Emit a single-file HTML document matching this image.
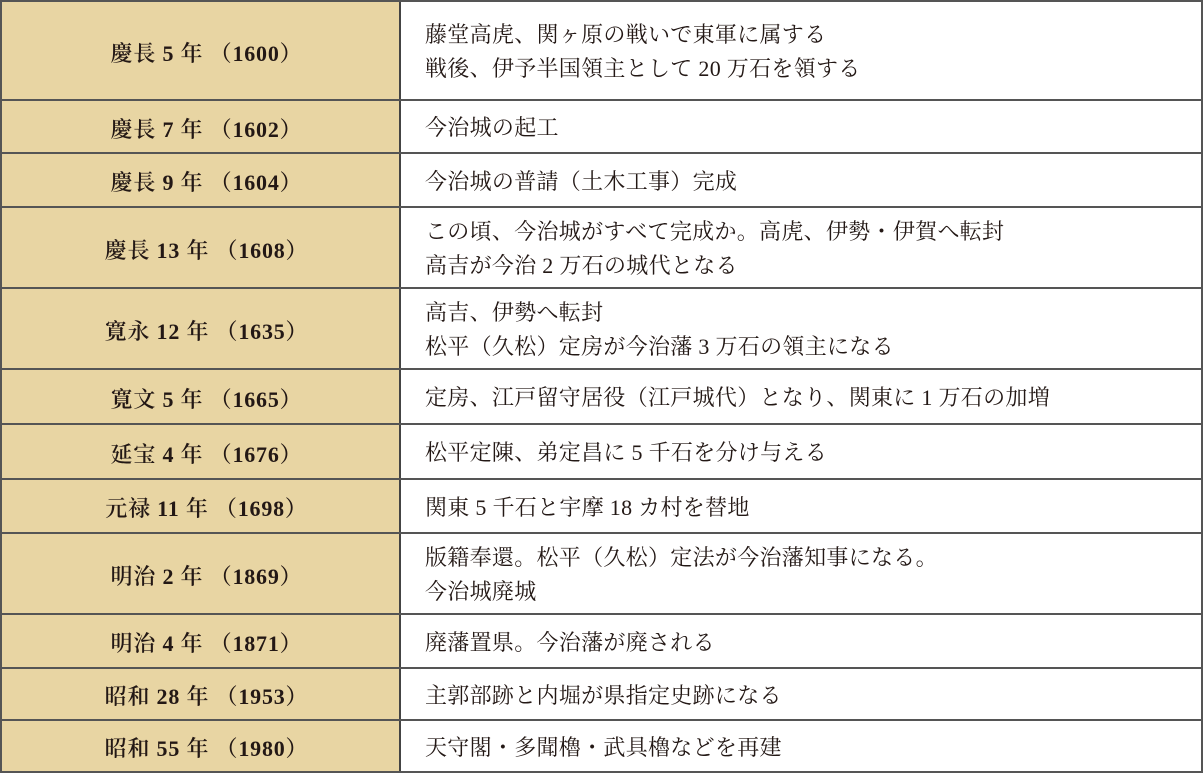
<!DOCTYPE html>
<html><head><meta charset="utf-8"><style>
body{margin:0;background:#fff;width:1203px;height:774px;position:relative;overflow:hidden;font-family:"Liberation Serif","Noto Serif CJK SC",serif;color:#231815}
.t{position:absolute;left:0;top:0;width:1203px;height:773px;border:2px solid #555;box-sizing:border-box;}
.r{position:absolute;left:0;width:1199px;border-bottom:2px solid #555;box-sizing:border-box;display:flex}
.r:last-child{border-bottom:none}
.l{width:399px;background:#e8d5a3;border-right:2px solid #444;display:flex;align-items:center;justify-content:center;font-size:22px;font-weight:600;padding-left:12px;padding-top:3px;box-sizing:border-box;letter-spacing:0.8px}
.c{flex:1;display:flex;flex-direction:column;justify-content:center;padding-left:24px;padding-top:3px;font-size:22px;line-height:34px;letter-spacing:0.3px}
</style></head><body><div class="t">
<div class="r" style="top:0;height:99px"><div class="l">慶長 5 年 （1600）</div><div class="c"><div>藤堂高虎、関ヶ原の戦いで東軍に属する</div><div>戦後、伊予半国領主として 20 万石を領する</div></div></div>
<div class="r" style="top:99px;height:53px"><div class="l">慶長 7 年 （1602）</div><div class="c">今治城の起工</div></div>
<div class="r" style="top:152px;height:54px"><div class="l">慶長 9 年 （1604）</div><div class="c">今治城の普請（土木工事）完成</div></div>
<div class="r" style="top:206px;height:81px"><div class="l">慶長 13 年 （1608）</div><div class="c"><div>この頃、今治城がすべて完成か。高虎、伊勢・伊賀へ転封</div><div>高吉が今治 2 万石の城代となる</div></div></div>
<div class="r" style="top:287px;height:81px"><div class="l">寛永 12 年 （1635）</div><div class="c"><div>高吉、伊勢へ転封</div><div>松平（久松）定房が今治藩 3 万石の領主になる</div></div></div>
<div class="r" style="top:368px;height:55px"><div class="l">寛文 5 年 （1665）</div><div class="c">定房、江戸留守居役（江戸城代）となり、関東に 1 万石の加増</div></div>
<div class="r" style="top:423px;height:55px"><div class="l">延宝 4 年 （1676）</div><div class="c">松平定陳、弟定昌に 5 千石を分け与える</div></div>
<div class="r" style="top:478px;height:54px"><div class="l">元禄 11 年 （1698）</div><div class="c">関東 5 千石と宇摩 18 カ村を替地</div></div>
<div class="r" style="top:532px;height:81px"><div class="l">明治 2 年 （1869）</div><div class="c"><div>版籍奉還。松平（久松）定法が今治藩知事になる。</div><div>今治城廃城</div></div></div>
<div class="r" style="top:613px;height:54px"><div class="l">明治 4 年 （1871）</div><div class="c">廃藩置県。今治藩が廃される</div></div>
<div class="r" style="top:667px;height:52px"><div class="l">昭和 28 年 （1953）</div><div class="c">主郭部跡と内堀が県指定史跡になる</div></div>
<div class="r" style="top:719px;height:50px"><div class="l">昭和 55 年 （1980）</div><div class="c">天守閣・多聞櫓・武具櫓などを再建</div></div>
</div></body></html>
